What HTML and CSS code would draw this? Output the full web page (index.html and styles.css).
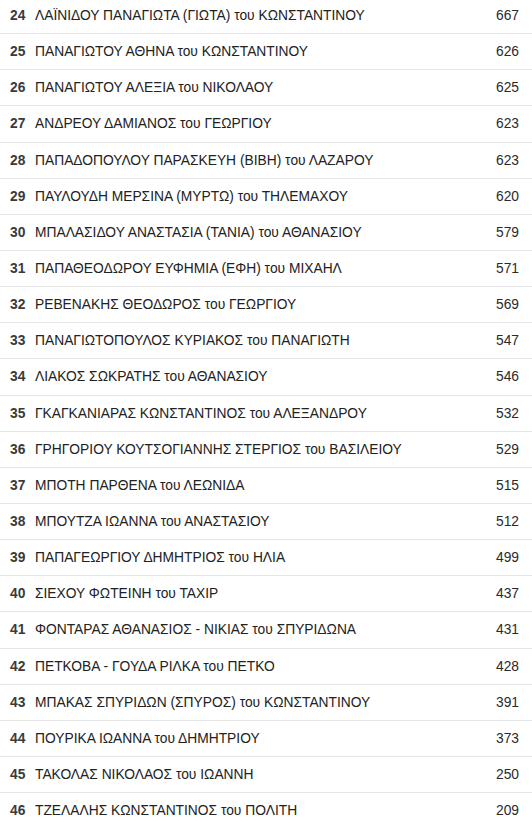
FILE: index.html
```html
<!DOCTYPE html>
<html lang="el">
<head>
<meta charset="utf-8">
<link rel="stylesheet" href="styles.css">
</head>
<body>
<div class="list">
  <div class="row"><span class="rank">24</span><span class="name">ΛΑΪΝΙΔΟΥ ΠΑΝΑΓΙΩΤΑ (ΓΙΩΤΑ) του ΚΩΝΣΤΑΝΤΙΝΟΥ</span><span class="votes">667</span></div>
  <div class="row"><span class="rank">25</span><span class="name">ΠΑΝΑΓΙΩΤΟΥ ΑΘΗΝΑ του ΚΩΝΣΤΑΝΤΙΝΟΥ</span><span class="votes">626</span></div>
  <div class="row"><span class="rank">26</span><span class="name">ΠΑΝΑΓΙΩΤΟΥ ΑΛΕΞΙΑ του ΝΙΚΟΛΑΟΥ</span><span class="votes">625</span></div>
  <div class="row"><span class="rank">27</span><span class="name">ΑΝΔΡΕΟΥ ΔΑΜΙΑΝΟΣ του ΓΕΩΡΓΙΟΥ</span><span class="votes">623</span></div>
  <div class="row"><span class="rank">28</span><span class="name">ΠΑΠΑΔΟΠΟΥΛΟΥ ΠΑΡΑΣΚΕΥΗ (ΒΙΒΗ) του ΛΑΖΑΡΟΥ</span><span class="votes">623</span></div>
  <div class="row"><span class="rank">29</span><span class="name">ΠΑΥΛΟΥΔΗ ΜΕΡΣΙΝΑ (ΜΥΡΤΩ) του ΤΗΛΕΜΑΧΟΥ</span><span class="votes">620</span></div>
  <div class="row"><span class="rank">30</span><span class="name">ΜΠΑΛΑΣΙΔΟΥ ΑΝΑΣΤΑΣΙΑ (ΤΑΝΙΑ) του ΑΘΑΝΑΣΙΟΥ</span><span class="votes">579</span></div>
  <div class="row"><span class="rank">31</span><span class="name">ΠΑΠΑΘΕΟΔΩΡΟΥ ΕΥΦΗΜΙΑ (ΕΦΗ) του ΜΙΧΑΗΛ</span><span class="votes">571</span></div>
  <div class="row"><span class="rank">32</span><span class="name">ΡΕΒΕΝΑΚΗΣ ΘΕΟΔΩΡΟΣ του ΓΕΩΡΓΙΟΥ</span><span class="votes">569</span></div>
  <div class="row"><span class="rank">33</span><span class="name">ΠΑΝΑΓΙΩΤΟΠΟΥΛΟΣ ΚΥΡΙΑΚΟΣ του ΠΑΝΑΓΙΩΤΗ</span><span class="votes">547</span></div>
  <div class="row"><span class="rank">34</span><span class="name">ΛΙΑΚΟΣ ΣΩΚΡΑΤΗΣ του ΑΘΑΝΑΣΙΟΥ</span><span class="votes">546</span></div>
  <div class="row"><span class="rank">35</span><span class="name">ΓΚΑΓΚΑΝΙΑΡΑΣ ΚΩΝΣΤΑΝΤΙΝΟΣ του ΑΛΕΞΑΝΔΡΟΥ</span><span class="votes">532</span></div>
  <div class="row"><span class="rank">36</span><span class="name">ΓΡΗΓΟΡΙΟΥ ΚΟΥΤΣΟΓΙΑΝΝΗΣ ΣΤΕΡΓΙΟΣ του ΒΑΣΙΛΕΙΟΥ</span><span class="votes">529</span></div>
  <div class="row"><span class="rank">37</span><span class="name">ΜΠΟΤΗ ΠΑΡΘΕΝΑ του ΛΕΩΝΙΔΑ</span><span class="votes">515</span></div>
  <div class="row"><span class="rank">38</span><span class="name">ΜΠΟΥΤΖΑ ΙΩΑΝΝΑ του ΑΝΑΣΤΑΣΙΟΥ</span><span class="votes">512</span></div>
  <div class="row"><span class="rank">39</span><span class="name">ΠΑΠΑΓΕΩΡΓΙΟΥ ΔΗΜΗΤΡΙΟΣ του ΗΛΙΑ</span><span class="votes">499</span></div>
  <div class="row"><span class="rank">40</span><span class="name">ΣΙΕΧΟΥ ΦΩΤΕΙΝΗ του ΤΑΧΙΡ</span><span class="votes">437</span></div>
  <div class="row"><span class="rank">41</span><span class="name">ΦΟΝΤΑΡΑΣ ΑΘΑΝΑΣΙΟΣ - ΝΙΚΙΑΣ του ΣΠΥΡΙΔΩΝΑ</span><span class="votes">431</span></div>
  <div class="row"><span class="rank">42</span><span class="name">ΠΕΤΚΟΒΑ - ΓΟΥΔΑ ΡΙΛΚΑ του ΠΕΤΚΟ</span><span class="votes">428</span></div>
  <div class="row"><span class="rank">43</span><span class="name">ΜΠΑΚΑΣ ΣΠΥΡΙΔΩΝ (ΣΠΥΡΟΣ) του ΚΩΝΣΤΑΝΤΙΝΟΥ</span><span class="votes">391</span></div>
  <div class="row"><span class="rank">44</span><span class="name">ΠΟΥΡΙΚΑ ΙΩΑΝΝΑ του ΔΗΜΗΤΡΙΟΥ</span><span class="votes">373</span></div>
  <div class="row"><span class="rank">45</span><span class="name">ΤΑΚΟΛΑΣ ΝΙΚΟΛΑΟΣ του ΙΩΑΝΝΗ</span><span class="votes">250</span></div>
  <div class="row"><span class="rank">46</span><span class="name">ΤΖΕΛΑΛΗΣ ΚΩΝΣΤΑΝΤΙΝΟΣ του ΠΟΛΙΤΗ</span><span class="votes">209</span></div>
</div>
</body>
</html>
```

FILE: styles.css
```css
html, body {
  margin: 0;
  padding: 0;
  background: #ffffff;
}
body {
  font-family: "Liberation Sans", Arial, sans-serif;
  font-size: 13.8px;
  color: #222222;
  width: 532px;
  overflow: hidden;
}
.list {
  margin-top: -2px;
}
.row {
  display: flex;
  align-items: center;
  height: 36.15px;
  box-sizing: border-box;
  border-bottom: 1px solid #e6e6e6;
  padding: 0 13px 0 10px;
}
.rank {
  width: 25px;
  font-weight: bold;
  color: #3a3a3a;
  flex: none;
}
.name {
  flex: 1;
  white-space: nowrap;
}
.votes {
  flex: none;
  color: #2a2a2a;
  text-align: right;
}
```
